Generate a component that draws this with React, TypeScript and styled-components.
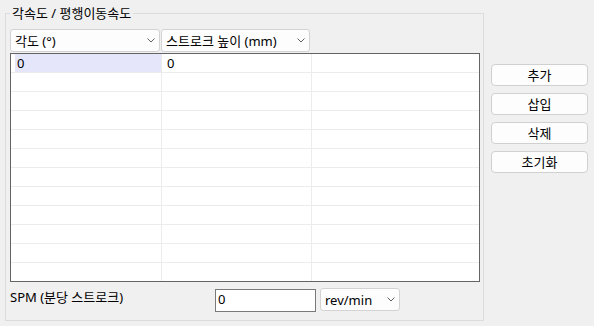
import React from "react"
import styled, { createGlobalStyle } from "styled-components"

const Global = createGlobalStyle`
  html, body {
    margin: 0;
    padding: 0;
    background: #f0f0f0;
  }
  body {
    font-family: "Noto Sans", "Noto Sans CJK KR", sans-serif;
    font-size: 13px;
    color: #000;
  }
`

const ROWS = 12

const Page = styled.div`
  width: 594px;
  height: 326px;
  box-sizing: border-box;
  padding: 5px 0 0 5px;
  display: flex;
  align-items: flex-start;
  gap: 7px;
`

const Group = styled.fieldset`
  margin: 0;
  width: 479px;
  box-sizing: border-box;
  border: 1px solid #dcdcdc;
  padding: 8px 3px 8px 4px;
  display: flex;
  flex-direction: column;
  min-inline-size: 0;
`

const Legend = styled.legend`
  padding: 0 2px;
  line-height: 16px;
  font-size: 13px;
`

const HeaderRow = styled.div`
  display: flex;
  gap: 1px;
  margin-bottom: 1px;
`

const Combo = styled.div<{ $w: number }>`
  width: ${(p) => p.$w}px;
  height: 23px;
  box-sizing: border-box;
  border: 1px solid #d3d3d3;
  border-radius: 3px;
  background: #fdfdfd;
  display: flex;
  align-items: center;
  justify-content: space-between;
  padding: 0 4px 0 4px;
  line-height: 16px;
  white-space: nowrap;
`

const Grid = styled.div`
  height: 229px;
  box-sizing: border-box;
  border: 1px solid #646464;
  background: #fff;
  overflow: hidden;
`

const Row = styled.div`
  display: grid;
  grid-template-columns: 151px 150px 1fr;
  height: 19px;
  box-sizing: border-box;
  border-bottom: 1px solid #ececec;
`

const Cell = styled.div<{ $selected?: boolean }>`
  border-right: 1px solid #ececec;
  padding-left: ${(p) => (p.$selected ? 4 : 5)}px;
  line-height: 18px;
  display: flex;
  &:last-child {
    border-right: none;
  }
`

const Highlight = styled.div`
  flex: 1;
  background: #e6e6fa;
  padding-left: 2px;
`

const Footer = styled.div`
  display: flex;
  align-items: flex-start;
  margin-top: 6px;
`

const Label = styled.div`
  width: 205px;
  line-height: 16px;
  margin-top: 1px;
`

const TextBox = styled.div`
  width: 101px;
  height: 23px;
  box-sizing: border-box;
  margin-top: 1px;
  border: 1px solid #7a7a7a;
  background: #fff;
  padding: 0 2px;
  line-height: 18px;
`

const Side = styled.div`
  display: flex;
  flex-direction: column;
  gap: 7px;
  margin-top: 59px;
`

const Button = styled.div`
  width: 97px;
  height: 22px;
  box-sizing: border-box;
  border: 1px solid #d0d0d0;
  border-radius: 4px;
  background: #fdfdfd;
  display: flex;
  align-items: center;
  justify-content: center;
  line-height: 16px;
`

const Chevron = () => (
  <svg width="8" height="5" viewBox="0 0 8 5">
    <path d="M0.5 0.5 L4 4 L7.5 0.5" fill="none" stroke="#606060" strokeWidth="1" />
  </svg>
)

export default function App() {
  return (
    <>
      <Global />
      <Page>
        <Group>
          <Legend>각속도 / 평행이동속도</Legend>
          <HeaderRow>
            <Combo $w={150}>
              <span>각도 (°)</span>
              <Chevron />
            </Combo>
            <Combo $w={149}>
              <span>스트로크 높이 (mm)</span>
              <Chevron />
            </Combo>
          </HeaderRow>
          <Grid>
            {Array.from({ length: ROWS }).map((_, i) => (
              <Row key={i}>
                <Cell $selected={i === 0}>
                  {i === 0 ? <Highlight>0</Highlight> : null}
                </Cell>
                <Cell>{i === 0 ? "0" : ""}</Cell>
                <Cell />
              </Row>
            ))}
          </Grid>
          <Footer>
            <Label>SPM (분당 스트로크)</Label>
            <TextBox>0</TextBox>
            <Combo $w={80} style={{ marginLeft: 4 }}>
              <span>rev/min</span>
              <Chevron />
            </Combo>
          </Footer>
        </Group>
        <Side>
          <Button>추가</Button>
          <Button>삽입</Button>
          <Button>삭제</Button>
          <Button>초기화</Button>
        </Side>
      </Page>
    </>
  )
}
